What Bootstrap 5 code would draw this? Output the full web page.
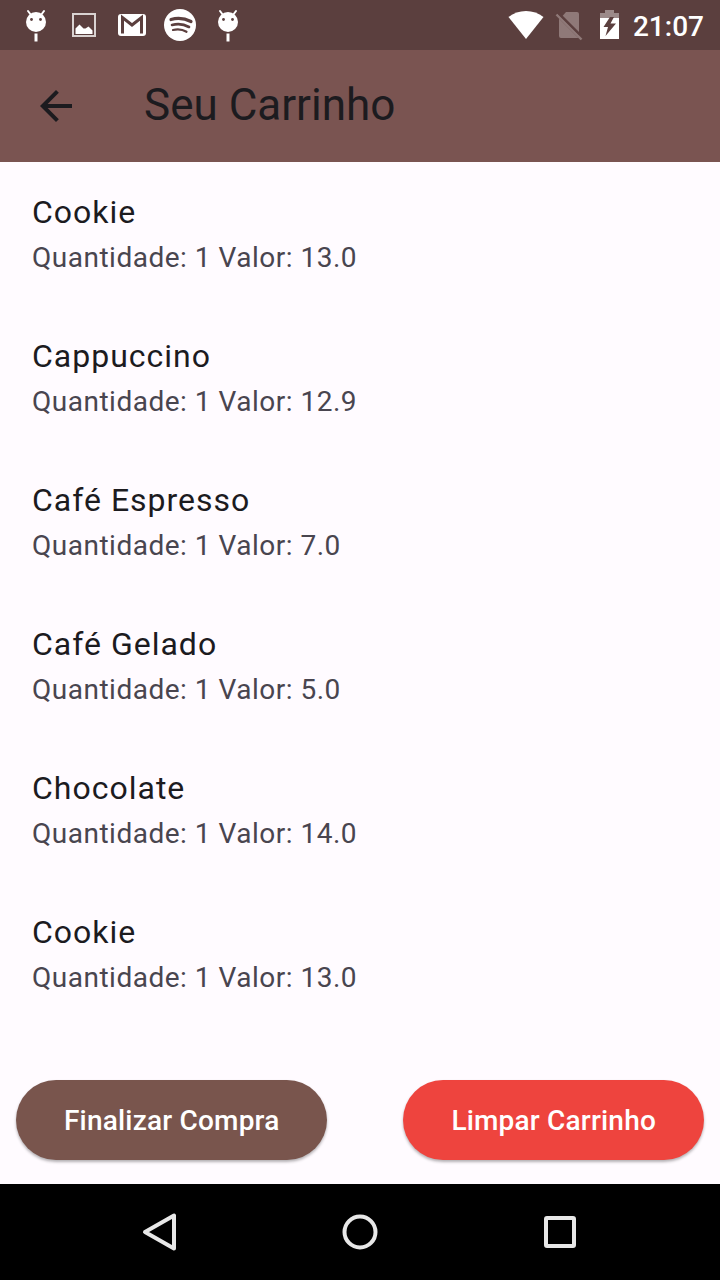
<!DOCTYPE html>
<html lang="pt-BR">
<head>
<meta charset="utf-8">
<meta name="viewport" content="width=device-width, initial-scale=1">
<title>Seu Carrinho</title>
<link href="https://cdn.jsdelivr.net/npm/bootstrap@5.3.0/dist/css/bootstrap.min.css" rel="stylesheet">
<style>
  body { font-family: Roboto, "Liberation Sans", sans-serif; background: #fffbff; color: #1c1b1f; }
  svg { display: block; flex: none; }
  .status-bar { background: #5b3f3e; height: 50px; padding: 0 16px 0 12px; }
  .sim-icon { margin: 0 12px 0 8px; }
  .clock { font-size: 28px; line-height: 48px; font-weight: 500; padding-top: 4px; margin-left: 13px; }
  .app-bar { background: #7a5451; height: 112px; padding: 0 32px; gap: 64px; }
  .app-title { font-size: 44px; line-height: 56px; font-weight: 400; padding-bottom: 2px; }
  .icon-btn { color: inherit; background: none; border: 0; padding: 0; }
  .cart-item { padding: 28px 32px 24px; }
  .item-name { font-size: 32px; line-height: 44px; letter-spacing: 1px; font-weight: 400; }
  .item-info { font-size: 28px; line-height: 48px; letter-spacing: .018em; color: #49454f; }
  .cart-actions { padding: 24px 16px; }
  .pill { height: 80px; padding: 2px 48px 0; font-size: 28px; line-height: 40px; letter-spacing: .007em; font-weight: 500; border: 0; box-shadow: 0 2px 3px rgba(0, 0, 0, .3); }
  .pill-brown, .pill-brown:hover { background: #79554d; }
  .pill-red, .pill-red:hover { background: #ee443e; }
  .nav-keys { background: #000; height: 96px; padding: 0 60px; }
</style>
</head>
<body class="d-flex flex-column min-vh-100">
<svg width="0" height="0" class="position-absolute" aria-hidden="true">
  <symbol id="droid" viewBox="0 0 48 48">
    <circle cx="24" cy="21" r="10" fill="#fff"/>
    <path d="M19 14l-3-4M29 14l3-4" stroke="#fff" stroke-width="2" stroke-linecap="round"/>
    <path d="M22.500 32.500h3v8h-3z" fill="#fff"/>
    <circle cx="19.500" cy="18.500" r="1.400" fill="#5b3f3e"/><circle cx="28.500" cy="18.500" r="1.400" fill="#5b3f3e"/>
  </symbol>
</svg>

<div class="status-bar d-flex align-items-center text-white">
  <svg width="48" height="48"><use href="#droid"/></svg>
  <svg width="48" height="48" viewBox="0 0 48 48"><path d="M13 13h22v22H13z" fill="none" stroke="#d9d2d1" stroke-width="2"/><path d="M15.500 33v-5.500l4-4 4 4h2l3-2 4 4V33z" fill="#fff"/></svg>
  <svg width="48" height="48" viewBox="0 0 48 48"><rect x="10" y="13" width="28" height="22" rx="3" fill="#fff"/><path d="M14.500 32.500V16.500L24 24l9.500-7.500v16" fill="none" stroke="#5b3f3e" stroke-width="3"/></svg>
  <svg width="48" height="48" viewBox="0 0 48 48"><circle cx="24" cy="24" r="16" fill="#fff"/><g fill="none" stroke="#5b3f3e" stroke-linecap="round"><path d="M15 18.500c7-2 14-1 20 2" stroke-width="3.200"/><path d="M16 24c6-1.600 12-.8 17 2" stroke-width="2.600"/><path d="M17 29c5-1.200 9.500-.6 13.500 1.800" stroke-width="2.200"/></g></svg>
  <svg width="48" height="48"><use href="#droid"/></svg>
  <div class="d-flex align-items-center ms-auto">
    <svg width="36" height="30" viewBox="0 0 36 30"><path d="M18 29L.500 7C10-1 26-1 35.500 7z" fill="#fff"/></svg>
    <svg class="sim-icon" width="36" height="32" viewBox="0 0 36 32"><path d="M14 3h11q2 0 2 2v18.500L10.500 7zM7 9.500L26.500 29H9q-2 0-2-2z" fill="#8f7978"/><path d="M4.500 5.500l25 25" stroke="#8f7978" stroke-width="2.400"/><path d="M6.500 4L28 25.500" stroke="#5b3f3e" stroke-width="2"/></svg>
    <svg width="20" height="30" viewBox="0 0 20 30"><path d="M0 8h19v21H0z" fill="#fff"/><path d="M0 3h5V0h9v3h5v5H0z" fill="#9c8a89"/><path d="M10 7L3.500 17H8l-2.500 9L16 13.500h-5.500L14 7z" fill="#5b3f3e"/></svg>
    <span class="clock">21:07</span>
  </div>
</div>

<header class="app-bar d-flex align-items-center">
  <button class="icon-btn" type="button" aria-label="Voltar"><svg width="48" height="48" viewBox="0 0 24 24"><path d="M20 11H7.830l5.590-5.590L12 4l-8 8 8 8 1.410-1.410L7.830 13H20z" fill="currentColor"/></svg></button>
  <h1 class="app-title mb-0">Seu Carrinho</h1>
</header>

<main class="flex-grow-1">
  <ul class="list-unstyled mb-0">
    <li class="cart-item"><h2 class="item-name mb-0">Cookie</h2><p class="item-info mb-0">Quantidade: 1 Valor: 13.0</p></li>
    <li class="cart-item"><h2 class="item-name mb-0">Cappuccino</h2><p class="item-info mb-0">Quantidade: 1 Valor: 12.9</p></li>
    <li class="cart-item"><h2 class="item-name mb-0">Café Espresso</h2><p class="item-info mb-0">Quantidade: 1 Valor: 7.0</p></li>
    <li class="cart-item"><h2 class="item-name mb-0">Café Gelado</h2><p class="item-info mb-0">Quantidade: 1 Valor: 5.0</p></li>
    <li class="cart-item"><h2 class="item-name mb-0">Chocolate</h2><p class="item-info mb-0">Quantidade: 1 Valor: 14.0</p></li>
    <li class="cart-item"><h2 class="item-name mb-0">Cookie</h2><p class="item-info mb-0">Quantidade: 1 Valor: 13.0</p></li>
  </ul>
</main>

<div class="cart-actions d-flex justify-content-between">
  <button type="button" class="btn pill pill-brown rounded-pill text-white">Finalizar Compra</button>
  <button type="button" class="btn pill pill-red rounded-pill text-white">Limpar Carrinho</button>
</div>

<nav class="nav-keys d-flex align-items-center" aria-label="Sistema">
  <button class="icon-btn w-100 d-flex justify-content-center" type="button" aria-label="Voltar"><svg width="40" height="40" viewBox="0 0 40 40"><path d="M34 3.500v33L5 20z" fill="none" stroke="#e8e8e8" stroke-width="4" stroke-linejoin="round"/></svg></button>
  <button class="icon-btn w-100 d-flex justify-content-center" type="button" aria-label="Início"><svg width="40" height="40" viewBox="0 0 40 40"><circle cx="20" cy="20" r="15.500" fill="none" stroke="#e8e8e8" stroke-width="4"/></svg></button>
  <button class="icon-btn w-100 d-flex justify-content-center" type="button" aria-label="Recentes"><svg width="40" height="40" viewBox="0 0 40 40"><rect x="6" y="6" width="28" height="28" rx="1" fill="none" stroke="#e8e8e8" stroke-width="4"/></svg></button>
</nav>
<script src="https://cdn.jsdelivr.net/npm/bootstrap@5.3.0/dist/js/bootstrap.bundle.min.js"></script>
</body>
</html>
